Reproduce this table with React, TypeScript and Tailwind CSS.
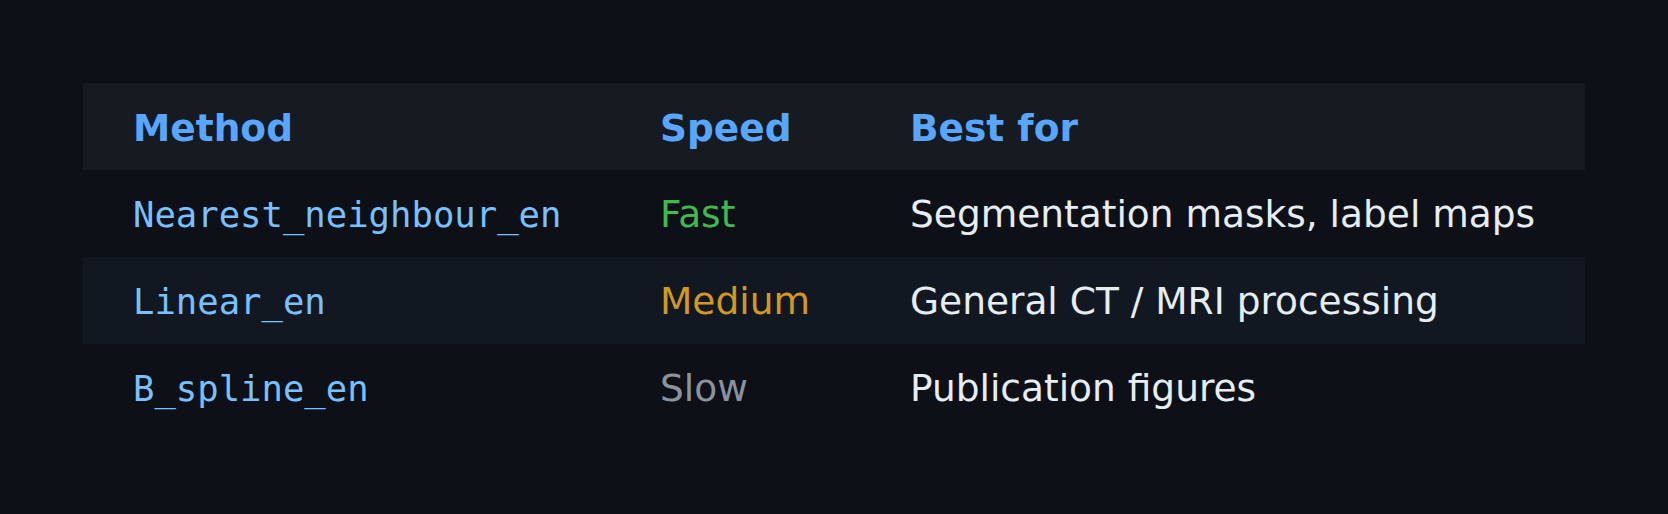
import React from "react";

type Row = { method: string; speed: string; speedColor: string; best: string };

const rows: Row[] = [
  { method: "Nearest_neighbour_en", speed: "Fast", speedColor: "text-[#3fb950]", best: "Segmentation masks, label maps" },
  { method: "Linear_en", speed: "Medium", speedColor: "text-[#d29922]", best: "General CT / MRI processing" },
  { method: "B_spline_en", speed: "Slow", speedColor: "text-[#8b949e]", best: "Publication figures" },
];

export default function App() {
  return (
    <div
      className="h-screen bg-[#0d1117] p-[83px] text-[37.5px] text-[#e6edf3]"
      style={{ fontFamily: '"DejaVu Sans", Verdana, sans-serif' }}
    >
      <table className="w-full table-fixed border-collapse">
        <colgroup>
          <col className="w-[527px]" />
          <col className="w-[250px]" />
          <col />
        </colgroup>
        <thead>
          <tr className="h-[87px] bg-[#161b22]">
            <th className="pl-[50px] pt-[3px] text-left align-middle font-bold text-[#58a6ff]">Method</th>
            <th className="pl-[50px] pt-[3px] text-left align-middle font-bold text-[#58a6ff]">Speed</th>
            <th className="pl-[50px] pt-[3px] text-left align-middle font-bold text-[#58a6ff]">Best for</th>
          </tr>
        </thead>
        <tbody>
          {rows.map((r, i) => (
            <tr key={r.method} className={i % 2 === 1 ? "h-[87px] bg-[#121821]" : "h-[87px]"}>
              <td className="pl-[50px] pt-[2px] align-middle">
                <code
                  className="text-[35.6px] text-[#79c0ff]"
                  style={{ fontFamily: '"DejaVu Sans Mono", monospace' }}
                >
                  {r.method}
                </code>
              </td>
              <td className={`pl-[50px] pt-[2px] align-middle ${r.speedColor}`}>{r.speed}</td>
              <td className="pl-[50px] pt-[2px] align-middle whitespace-nowrap">{r.best}</td>
            </tr>
          ))}
        </tbody>
      </table>
    </div>
  );
}
